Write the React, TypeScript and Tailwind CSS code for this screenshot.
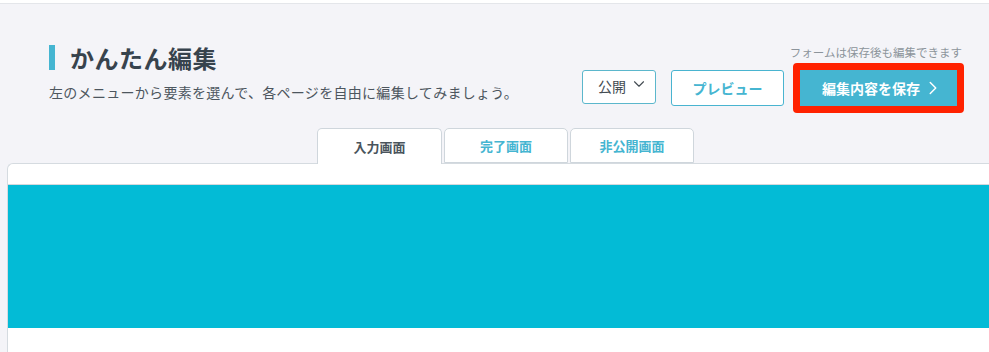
import { ChevronDown, ChevronRight } from 'lucide-react'

const tabs = [
  { label: '入力画面', active: true },
  { label: '完了画面', active: false },
  { label: '非公開画面', active: false },
]

export default function App() {
  return (
    <div className="w-[989px] h-[352px] overflow-hidden bg-[#f4f4f8] font-['Noto_Sans_CJK_JP','Noto_Sans',sans-serif] text-[#37434d]">
      <div className="h-[4px] bg-white border-b border-[#e4e6ea]" />

      {/* header */}
      <div className="flex justify-between h-[124px] pl-[49px] pr-[25px]">
        <div className="mt-[41px]">
          <div className="flex items-center h-[25px]">
            <span className="w-[6px] h-[25px] bg-[#45b5d1]" />
            <h1 className="ml-[15px] text-[24px] leading-[25px] font-bold tracking-[0.5px]">かんたん編集</h1>
          </div>
          <p className="mt-[12px] text-[14px] leading-[20px] text-[#4d565e] tracking-[0.3px]">
            左のメニューから要素を選んで、各ページを自由に編集してみましょう。
          </p>
        </div>

        <div className="flex flex-col items-end mt-[41px]">
          <p className="text-[11.5px] leading-[14px] text-[#8c949b] pr-[2px]">フォームは保存後も編集できます</p>
          <div className="flex items-center mt-[4px]">
            <button className="flex items-center justify-between w-[74px] h-[34px] mt-[-3px] pl-[15px] pr-[7px] bg-white border border-[#5bb7cc] rounded-[3px] text-[14px] text-[#444c53]">
              公開
              <ChevronDown className="w-[18px] h-[18px] mt-[-5px]" strokeWidth={1.5} />
            </button>
            <button className="ml-[15px] w-[113px] h-[36px] bg-white border border-[#49b4d0] rounded-[3px] text-[14px] font-bold text-[#45b5d1]">
              プレビュー
            </button>
            <div className="ml-[9px] border-[7px] border-[#ff2200] rounded-[4px]">
              <button className="flex items-center w-[157px] h-[36px] pl-[22px] bg-[#45b5d1] text-white text-[14px] font-bold">
                編集内容を保存
                <ChevronRight className="ml-[2px] w-[22px] h-[22px]" strokeWidth={1.6} />
              </button>
            </div>
          </div>
        </div>
      </div>

      {/* tabs */}
      <div className="relative z-10 flex gap-[2px] pl-[317px] -mb-px">
        {tabs.map(t => (
          <div
            key={t.label}
            className={
              t.active
                ? 'w-[125px] h-[36px] flex items-center justify-center bg-white border border-b-0 border-[#cfd6dc] rounded-t-[5px] text-[13px] font-bold text-[#4a545c]'
                : 'w-[124px] h-[35px] flex items-center justify-center bg-white border border-[#cfd6dc] rounded-t-[5px] text-[13px] font-bold text-[#45b5d1]'
            }
          >
            {t.label}
          </div>
        ))}
      </div>

      {/* panel */}
      <div className="ml-[7px] bg-white border border-r-0 border-[#d5dbe0] rounded-tl-[6px] h-[200px]">
        <div className="h-[21px] border-b border-[#d5d8dc]" />
        <div className="h-[143px] bg-[#03bbd6]" />
      </div>
    </div>
  )
}
